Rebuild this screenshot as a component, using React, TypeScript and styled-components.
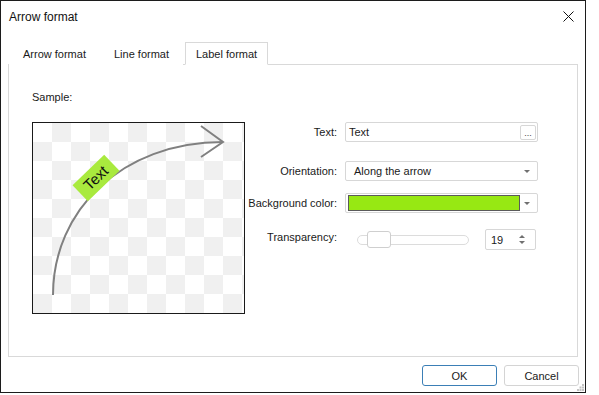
import styled, { createGlobalStyle } from 'styled-components';

const GlobalStyle = createGlobalStyle`
  html, body {
    margin: 0;
    padding: 0;
    background: #fff;
  }
  body {
    font-family: "Liberation Sans", Arial, sans-serif;
    font-size: 11px;
    color: #1a1a1a;
  }
`;

const tabs = ['Arrow format', 'Line format', 'Label format'];

function CloseIcon() {
  return (
    <svg width="11" height="11" viewBox="0 0 11 11">
      <path d="M0.5 0.5 L10.5 10.5 M10.5 0.5 L0.5 10.5" stroke="#111" strokeWidth="1" />
    </svg>
  );
}

function Caret() {
  return (
    <svg width="6" height="3" viewBox="0 0 6 3">
      <path d="M0 0 H6 L3 3 Z" fill="#707070" />
    </svg>
  );
}

function Preview() {
  return (
    <PreviewBox>
      <svg width="211" height="190" viewBox="0 0 211 190">
        <path
          d="M20 172 C20 88 88 19 190 19"
          fill="none"
          stroke="#808080"
          strokeWidth="2"
        />
        <path
          d="M168 3 L190 19 L168 34"
          fill="none"
          stroke="#808080"
          strokeWidth="2"
        />
        <g transform="translate(63 55) rotate(-44)">
          <rect x="-22" y="-11" width="44" height="22" fill="#a9ea3e" />
          <text
            x="0"
            y="5"
            textAnchor="middle"
            fontSize="15"
            fontFamily="Liberation Sans, Arial, sans-serif"
            fill="#111"
          >
            Text
          </text>
        </g>
      </svg>
    </PreviewBox>
  );
}

export default function App() {
  return (
    <>
      <GlobalStyle />
      <Dialog>
        <TitleBar>
          <Title>Arrow format</Title>
          <CloseButton>
            <CloseIcon />
          </CloseButton>
        </TitleBar>

        <TabStrip>
          {tabs.map((t) => (
            <Tab key={t} $active={t === 'Label format'}>
              {t}
            </Tab>
          ))}
        </TabStrip>

        <Panel>
          <SampleLabel>Sample:</SampleLabel>
          <Content>
            <Preview />
            <Form>
              <FieldRow $top={0}>
                <Label>Text:</Label>
                <Input>
                  <span>Text</span>
                  <DotsButton>...</DotsButton>
                </Input>
              </FieldRow>
              <FieldRow $top={19}>
                <Label>Orientation:</Label>
                <Combo>
                  <span>Along the arrow</span>
                  <Caret />
                </Combo>
              </FieldRow>
              <FieldRow $top={12}>
                <Label>Background color:</Label>
                <Combo $swatch>
                  <Swatch $color="#97e813" />
                  <Caret />
                </Combo>
              </FieldRow>
              <FieldRow $top={16}>
                <Label $up>Transparency:</Label>
                <SliderRow>
                  <Track>
                    <Thumb />
                  </Track>
                  <Spin>
                    <span>19</span>
                    <SpinArrows>
                      <svg width="6" height="3" viewBox="0 0 6 3">
                        <path d="M3 0 L6 3 H0 Z" fill="#707070" />
                      </svg>
                      <svg width="6" height="3" viewBox="0 0 6 3">
                        <path d="M0 0 H6 L3 3 Z" fill="#707070" />
                      </svg>
                    </SpinArrows>
                  </Spin>
                </SliderRow>
              </FieldRow>
            </Form>
          </Content>
        </Panel>

        <Footer>
          <Button $primary>OK</Button>
          <Button>Cancel</Button>
          <Grip>
            <svg width="7" height="7" viewBox="0 0 7 7">
              <g fill="#c4c4c4">
                <rect x="5" y="0" width="2" height="2" />
                <rect x="2.5" y="2.5" width="2" height="2" />
                <rect x="5" y="2.5" width="2" height="2" />
                <rect x="0" y="5" width="2" height="2" />
                <rect x="2.5" y="5" width="2" height="2" />
                <rect x="5" y="5" width="2" height="2" />
              </g>
            </svg>
          </Grip>
        </Footer>
      </Dialog>
    </>
  );
}

const Dialog = styled.div`
  position: relative;
  box-sizing: border-box;
  width: 586px;
  height: 393px;
  border: 1px solid #1c1c1c;
  background: #fff;
  display: flex;
  flex-direction: column;
`;

const TitleBar = styled.div`
  height: 31px;
  display: flex;
  align-items: center;
  justify-content: space-between;
  padding: 0 11px 0 8px;
`;

const Title = styled.div`
  font-size: 12px;
  color: #111;
`;

const CloseButton = styled.div`
  display: flex;
  align-items: center;
  margin-top: -1px;
`;

const TabStrip = styled.div`
  display: flex;
  align-items: flex-end;
  height: 23px;
  margin: 10px 0 0 8px;
  position: relative;
  z-index: 1;
`;

const Tab = styled.div<{ $active?: boolean }>`
  box-sizing: border-box;
  height: 23px;
  padding: 0 ${(p) => (p.$active ? '10px' : '13px')};
  display: flex;
  align-items: center;
  font-size: 11px;
  color: #1a1a1a;
  border: 1px solid ${(p) => (p.$active ? '#d9d9d9' : 'transparent')};
  border-bottom: 1px solid ${(p) => (p.$active ? '#fff' : 'transparent')};
  background: #fff;
  margin-left: ${(p) => (p.$active ? '2px' : '0')};
`;

const Panel = styled.div`
  box-sizing: border-box;
  height: 293px;
  margin: -1px 7px 0 7px;
  border: 1px solid #d9d9d9;
  padding: 22px 0 0 23px;
`;

const SampleLabel = styled.div`
  height: 20px;
  line-height: 20px;
`;

const Content = styled.div`
  display: flex;
  margin-top: 15px;
`;

const PreviewBox = styled.div`
  width: 211px;
  height: 190px;
  border: 1px solid #1a1a1a;
  background: repeating-conic-gradient(#f0f0f0 0 25%, #fff 0 50%) 0 0 / 38px 38px;
  svg {
    display: block;
  }
`;

const Form = styled.div`
  display: flex;
  flex-direction: column;
`;

const FieldRow = styled.div<{ $top: number }>`
  display: grid;
  grid-template-columns: 92px 193px;
  column-gap: 8px;
  align-items: center;
  margin-top: ${(p) => p.$top}px;
`;

const Label = styled.div<{ $up?: boolean }>`
  text-align: right;
  white-space: nowrap;
  position: relative;
  top: ${(p) => (p.$up ? '-3px' : '0')};
`;

const fieldBox = `
  box-sizing: border-box;
  height: 20px;
  border: 1px solid #d7d7d7;
  border-radius: 2px;
  display: flex;
  align-items: center;
  justify-content: space-between;
  background: #fff;
`;

const Input = styled.div`
  ${fieldBox}
  padding: 0 1px 0 3px;
`;

const DotsButton = styled.div`
  box-sizing: border-box;
  width: 16px;
  height: 15px;
  border: 1px solid #d7d7d7;
  border-radius: 2px;
  font-size: 9px;
  line-height: 15px;
  text-align: center;
  color: #444;
`;

const Combo = styled.div<{ $swatch?: boolean }>`
  ${fieldBox}
  padding: 0 7px 0 ${(p) => (p.$swatch ? '2px' : '8px')};
`;

const Swatch = styled.div<{ $color: string }>`
  box-sizing: border-box;
  width: 172px;
  height: 16px;
  background: ${(p) => p.$color};
  border: 1px solid #5a5a5a;
`;

const SliderRow = styled.div`
  display: flex;
  align-items: center;
  justify-content: space-between;
  height: 21px;
  padding-left: 12px;
`;

const Track = styled.div`
  position: relative;
  box-sizing: border-box;
  width: 112px;
  height: 10px;
  border: 1px solid #dcdcdc;
  border-radius: 5px;
  background: #fff;
`;

const Thumb = styled.div`
  position: absolute;
  left: 9px;
  top: -5px;
  box-sizing: border-box;
  width: 24px;
  height: 17px;
  border: 1px solid #cfcfcf;
  border-radius: 3px;
  background: #fff;
`;

const Spin = styled.div`
  box-sizing: border-box;
  width: 51px;
  height: 21px;
  margin-right: 2px;
  border: 1px solid #d7d7d7;
  border-radius: 2px;
  display: flex;
  align-items: center;
  justify-content: space-between;
  padding: 0 10px 0 5px;
`;

const SpinArrows = styled.div`
  display: flex;
  flex-direction: column;
  gap: 3px;
  svg {
    display: block;
  }
`;

const Footer = styled.div`
  display: flex;
  justify-content: flex-end;
  gap: 7px;
  padding: 8px 6px 0 0;
`;

const Button = styled.div<{ $primary?: boolean }>`
  box-sizing: border-box;
  width: 75px;
  height: 21px;
  border: 1px solid ${(p) => (p.$primary ? '#3b7fb6' : '#d4d4d4')};
  border-radius: 3px;
  display: flex;
  align-items: center;
  justify-content: center;
  background: #fff;
  color: #1a1a1a;
`;

const Grip = styled.div`
  position: absolute;
  right: 1px;
  bottom: 1px;
  line-height: 0;
`;
